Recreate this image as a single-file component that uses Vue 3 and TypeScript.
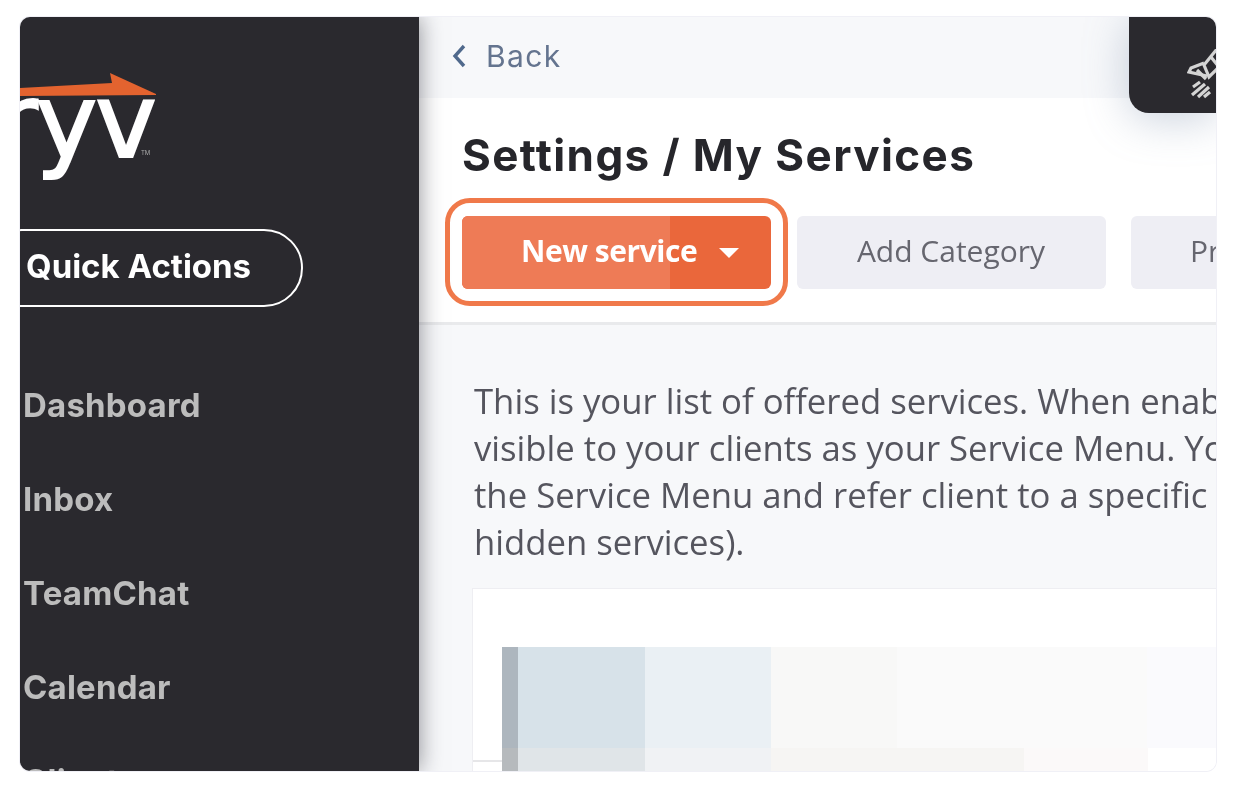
<script setup lang="ts">
const navItems: string[] = ['Dashboard', 'Inbox', 'TeamChat', 'Calendar', 'Clients']
const paragraph: string[] = [
  'This is your list of offered services. When enabled, they are',
  'visible to your clients as your Service Menu. You can hide items from',
  'the Service Menu and refer client to a specific service link (even',
  'hidden services).',
]
const topCells: string[] = ['#adb6be', '#d7e2e9', '#eaf0f4', '#f8f8f7', '#fafafa', '#fafafd']
const bottomCells: string[] = ['#b6babd', '#e0e5e8', '#f0f2f4', '#f6f5f3', '#fbf9f9', '#ffffff']
</script>

<template>
  <div class="page">
    <div class="card">
      <aside class="sidebar">
        <div class="logo">
          <span class="logo-text">ryv</span><span class="tm">TM</span>
          <svg class="arrow" width="136" height="24" viewBox="0 0 136 24" aria-hidden="true">
            <path d="M0 15 L92 10 L90 0 L136 21 L136 22 L0 23 Z" fill="#e3632f" />
          </svg>
        </div>
        <button class="quick">Quick Actions</button>
        <nav class="nav">
          <a v-for="item in navItems" :key="item" class="nav-item">{{ item }}</a>
        </nav>
      </aside>

      <main class="main">
        <div class="topbar">
          <svg class="chev" width="14" height="24" viewBox="0 0 14 24" aria-hidden="true">
            <path d="M12 2 L3 12 L12 22" fill="none" stroke="#50698c" stroke-width="3.4" />
          </svg>
          <span class="back">Back</span>
        </div>

        <div class="tab">
          <svg class="rocket" width="44" height="50" viewBox="0 0 44 50" aria-hidden="true">
            <g fill="none" stroke="#d4d4d4" stroke-width="3.2">
              <path d="M30 0 L17 16 L22 28 L36 14" />
              <path d="M17 14 L4 19 L2 23 L20 27" />
              <path d="M10 21 L19 30 M24 8 L32 18" />
              <path d="M6 38 L13 33 M5 46 L18 35 M11 48 L22 38 M17 48 L23 43" />
            </g>
          </svg>
        </div>

        <header class="head">
          <h1 class="title">Settings / My Services</h1>
          <div class="actions">
            <div class="primary-wrap">
              <button class="btn primary">
                <span class="primary-fade"></span>
                <span class="primary-label">New service</span>
                <span class="caret"></span>
              </button>
            </div>
            <button class="btn plain"><span class="lift">Add Category</span></button>
            <button class="btn plain third"><span class="lift">Preview</span></button>
          </div>
        </header>

        <section class="content">
          <p class="intro">
            <span v-for="line in paragraph" :key="line" class="line">{{ line }}</span>
          </p>
          <div class="panel">
            <div class="row top">
              <i v-for="(c, n) in topCells" :key="n" :style="{ background: c }"></i>
            </div>
            <div class="row bottom">
              <i v-for="(c, n) in bottomCells" :key="n" :style="{ background: c }"></i>
            </div>
            <div class="rule"></div>
          </div>
        </section>
      </main>
    </div>
  </div>
</template>

<style>
html, body { margin: 0; background: #fff; }
</style>

<style scoped>
.page {
  width: 1240px;
  height: 792px;
  box-sizing: border-box;
  padding: 17px 24px 21px 20px;
  background: #fff;
  overflow: hidden;
}
.card {
  display: flex;
  height: 100%;
  border-radius: 10px;
  overflow: hidden;
  box-shadow: 0 0 0 1px #f0f0f6;
  background: #fff;
  position: relative;
}
.sidebar {
  flex: 0 0 399px;
  background: #2a292e;
  color: #fff;
  overflow: hidden;
  position: relative;
  z-index: 2;
  box-shadow: 0 0 22px rgba(30, 30, 40, .5);
  font-family: Inter, "Liberation Sans", sans-serif;
}
.logo {
  height: 212px;
  position: relative;
  filter: blur(.6px);
}
.arrow { position: absolute; left: 0; top: 56px; }
.logo-text {
  position: absolute;
  left: -25px;
  top: 52px;
  font-family: "DejaVu Sans", sans-serif;
  font-size: 104px;
  line-height: 1;
  font-weight: 400;
  letter-spacing: -2px;
  color: #fff;
  -webkit-text-stroke: 2px #fff;
}
.tm {
  position: absolute;
  left: 121px;
  top: 132px;
  font-size: 6px;
  color: #aaa;
}
.quick {
  display: block;
  width: 320px;
  height: 78px;
  margin-left: -37px;
  box-sizing: border-box;
  border: 2px solid #fff;
  border-radius: 39px;
  background: transparent;
  color: #fff;
  font: 700 33px/70px Inter, "Liberation Sans", sans-serif;
  text-align: left;
  padding: 0 0 4px 41px;
  filter: blur(.5px);
}
.nav {
  display: flex;
  flex-direction: column;
  padding: 51px 0 0 3px;
  filter: blur(.5px);
}
.nav-item {
  height: 94px;
  flex: none;
  line-height: 94px;
  font-size: 33px;
  font-weight: 700;
  letter-spacing: .2px;
  color: #bcbcbc;
}
.main {
  flex: 1;
  min-width: 0;
  display: flex;
  flex-direction: column;
  position: relative;
  overflow: hidden;
  background: #f7f8fa;
}
.topbar {
  flex: 0 0 81px;
  display: flex;
  align-items: center;
  padding: 0 0 3px 33px;
  box-sizing: border-box;
  background: #f7f8fa;
  filter: blur(.4px);
}
.back {
  margin-left: 20px;
  font: 400 30px Inter, sans-serif;
  color: #64748f;
  letter-spacing: 1.4px;
}
.tab {
  position: absolute;
  top: 0;
  right: 0;
  width: 87px;
  height: 96px;
  background: #2a292e;
  border-bottom-left-radius: 20px;
  box-shadow: 0 6px 44px rgba(120, 140, 170, .4);
  overflow: hidden;
  z-index: 1;
}
.rocket { position: absolute; left: 58px; top: 32px; filter: blur(.5px); }
.head {
  flex: 0 0 227px;
  box-sizing: border-box;
  background: #fff;
  padding: 29px 0 0 43px;
  border-bottom: 3px solid #e9eaec;
}
.title {
  margin: 0;
  font: 700 44px/56px Inter, sans-serif;
  color: #26262b;
  letter-spacing: 1.4px;
  white-space: nowrap;
  filter: blur(.5px);
}
.actions {
  display: flex;
  gap: 25.5px;
  margin-top: 33px;
  white-space: nowrap;
}
.primary-wrap {
  position: relative;
  flex: none;
}
.primary-wrap::before {
  content: "";
  position: absolute;
  left: -17px;
  right: -17px;
  top: -18px;
  bottom: -17px;
  border: 5px solid #f0794a;
  border-radius: 25px;
  pointer-events: none;
}
.btn {
  display: block;
  width: 309px;
  height: 73px;
  flex: none;
  border: 0;
  padding: 0;
  border-radius: 6px;
  font-family: "Open Sans", sans-serif;
  font-size: 30px;
}
.primary {
  position: relative;
  display: flex;
  align-items: center;
  padding: 0 0 5px 59px;
  box-sizing: border-box;
  background: #ea673b;
  color: #fff;
  font-weight: 700;
  overflow: hidden;
}
.primary-fade {
  position: absolute;
  left: 0;
  top: 0;
  bottom: 0;
  width: 208px;
  background: #ee7b56;
}
.primary-label {
  position: relative;
  letter-spacing: -.45px;
  filter: blur(.4px);
}
.caret {
  position: relative;
  margin-left: 22px;
  margin-top: 5px;
  border-left: 10.5px solid transparent;
  border-right: 10.5px solid transparent;
  border-top: 10.5px solid #fff;
}
.plain {
  background: #eeeef4;
  color: #66666f;
}
.lift {
  display: block;
  margin-top: -5px;
  filter: blur(.4px);
}
.third {
  text-align: left;
  padding-left: 59px;
}
.content {
  flex: 1;
  min-height: 0;
  padding: 52px 0 0 55px;
  background: #f7f8fa;
}
.intro {
  margin: 0;
  font: 400 34.7px/47px "Open Sans", sans-serif;
  color: #55555e;
  white-space: nowrap;
  filter: blur(.4px);
}
.line { display: block; }
.panel {
  position: relative;
  margin: 24px 0 0 -1px;
  height: 200px;
  background: #fff;
  box-shadow: 0 0 0 1px #eeeef2;
  padding-top: 58px;
  box-sizing: border-box;
}
.row {
  display: flex;
  margin-left: 29px;
}
.row i { display: block; flex: none; width: 126px; }
.row i:first-child { width: 16px; }
.row i:nth-child(2) { width: 127px; }
.top { height: 101px; }
.top i:nth-child(5) { width: 250px; }
.top i:last-child { flex: 1; }
.bottom { height: 42px; }
.bottom i:nth-child(4) { width: 253px; }
.bottom i:nth-child(5) { width: 124px; }
.bottom i:last-child { flex: 1; }
.rule {
  position: absolute;
  left: 0;
  top: 171px;
  width: 29px;
  height: 2px;
  background: #e6e6e8;
}
</style>
